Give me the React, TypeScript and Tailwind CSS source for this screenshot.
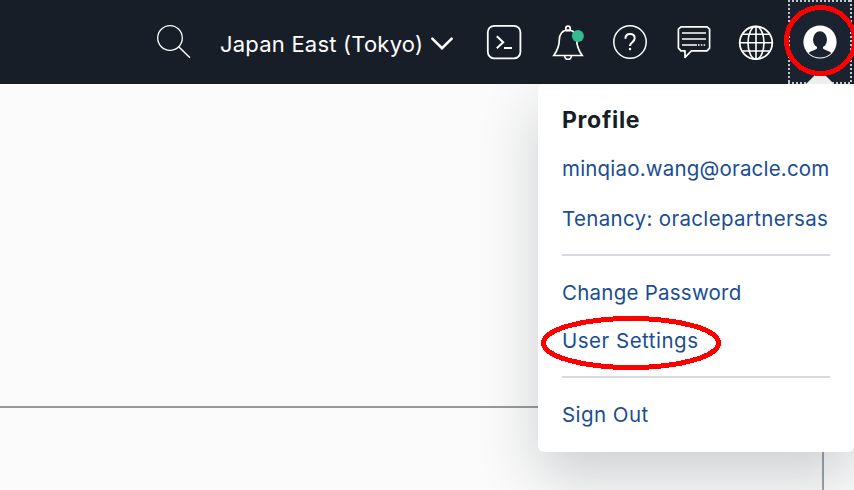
import type { ReactNode } from "react";

function Icon({ children, className = "" }: { children: ReactNode; className?: string }) {
  return (
    <svg
      width="36"
      height="36"
      viewBox="0 0 36 36"
      fill="none"
      stroke="white"
      strokeWidth="1.6"
      className={"shrink-0 " + className}
    >
      {children}
    </svg>
  );
}

function Header() {
  return (
    <header className="flex h-[84px] items-center bg-[#171e27] pl-[156px] text-white">
      <Icon className="mr-7">
        <circle cx="14" cy="14" r="12.3" strokeWidth="1.3" />
        <path d="M22.7 22.8 34 33.8" strokeWidth="1.5" />
      </Icon>
      <button className="flex w-[234px] items-center justify-between pt-1 whitespace-nowrap">
        <span className="text-[22px] leading-7 tracking-[0.21px]">Japan East (Tokyo)</span>
        <svg width="24" height="16" viewBox="0 0 24 16" fill="none" stroke="white" strokeWidth="2.5" strokeLinecap="round">
          <path d="M2.3 2.6 12 12.2 21.7 2.6" />
        </svg>
      </button>
      <Icon className="ml-8">
        <rect x="1.8" y="1.8" width="32.6" height="32.6" rx="6.5" strokeWidth="1.8" />
        <path d="m10.8 12.2 6.4 6-6.4 6M18 24h8" strokeWidth="2" />
      </Icon>
      <Icon className="ml-7">
        <path d="M3.8 31.5C7.3 26.7 9.3 21.5 9.3 15.8c0-6 3.4-9.7 8.7-9.7s8.7 3.7 8.7 9.7c0 5.7 2 10.9 5.5 15.7Z" strokeWidth="1.7" />
        <circle cx="18" cy="4.4" r="2.3" strokeWidth="1.6" />
        <path d="M14.6 31.5c.2 2.7 1.5 3.9 3.4 3.9s3.2-1.2 3.4-3.9" strokeWidth="1.6" />
        <circle cx="27.9" cy="12" r="6" fill="#34bb92" stroke="none" />
      </Icon>
      <Icon className="ml-[26px]">
        <circle cx="18" cy="18" r="16.2" strokeWidth="1.5" />
        <path d="M13.4 14.8c0-2.9 1.8-4.8 4.6-4.8s4.7 1.7 4.7 4.3c0 4-4.7 4-4.7 7.8" strokeWidth="2" />
        <path d="M18 23.9v2.3" strokeWidth="2.2" />
      </Icon>
      <Icon className="ml-7">
        <path d="M5 2.8h26l2.6 2.4v19L31 26.8H15.4L9 33.4v-6.6H5l-2.6-2.6v-19Z" strokeWidth="1.7" strokeLinejoin="round" />
        <path d="M6 9h24M6 15h24M6 21h15" strokeWidth="1.7" />
        <path d="M22 21h8" strokeDasharray="1.6 1.2" strokeWidth="1.6" />
      </Icon>
      <Icon className="ml-[26px]">
        <circle cx="18" cy="18.8" r="16.3" strokeWidth="1.8" />
        <ellipse cx="18" cy="18.8" rx="8" ry="16.3" />
        <path d="M18 2.5v32.6M1.7 18.8h32.6M4.5 10.3h27M4.5 27h27" strokeWidth="1.6" />
      </Icon>
      <button className="relative ml-[14px] flex h-[84px] w-16 shrink-0 items-center justify-center bg-[#1b2330]">
        <svg className="absolute inset-0" width="64" height="84" fill="none" stroke="#c2c5c9" strokeWidth="2" strokeDasharray="2 2">
          <path d="M0 1h64M1 0v84M63 0v84M0 83h64" />
        </svg>
        <svg width="36" height="36" viewBox="0 0 36 36">
          <circle cx="18" cy="18" r="16.6" fill="white" />
          <ellipse cx="18" cy="15.6" rx="7" ry="8.4" fill="#1b2330" />
          <path d="M15 22h6v2.4c1.4 1.6 5.8 2.2 8.4 4.6-6.6 6-16.2 6-22.8 0 2.6-2.4 7-3 8.4-4.6Z" fill="#1b2330" />
        </svg>
        <svg className="absolute top-[72px] left-[18px]" width="28" height="12" viewBox="0 0 28 12">
          <path d="M0 12 11 1q3-2 6 0l11 11Z" fill="#eeeeef" />
        </svg>
      </button>
    </header>
  );
}

function ProfileMenu() {
  return (
    <nav className="absolute top-[84px] left-[538px] h-[368px] w-[316px] rounded-md bg-white px-6 pt-5 text-[20.5px] leading-8 whitespace-nowrap text-[#194d95] shadow-[0_24px_60px_rgba(22,29,38,0.2)]">
      <h2 className="text-[23px] font-bold tracking-[0.7px] text-[#171e27]">Profile</h2>
      <a className="mt-[17px] block tracking-[0.19px]">minqiao.wang@oracle.com</a>
      <a className="mt-[18px] block tracking-[0.33px]">Tenancy: oraclepartnersas</a>
      <hr className="mt-[19px] w-[268px] border-t-2 border-[#d9dadf]" />
      <a className="mt-[21px] block tracking-[0.24px]">Change Password</a>
      <a className="mt-4 block tracking-[0.5px]">User Settings</a>
      <hr className="mt-[19px] w-[268px] border-t-2 border-[#d9dadf]" />
      <a className="mt-[21px] block tracking-[0.45px]">Sign Out</a>
    </nav>
  );
}

export default function App() {
  return (
    <div className="relative flex h-[490px] w-[854px] flex-col overflow-hidden bg-[#fbfbfb] font-['Inter',sans-serif]">
      <div className="relative z-10"><Header /></div>
      <main className="flex flex-1 flex-col">
        <section className="h-[324px] border-b-2 border-[#999999]" />
        <section className="w-[824px] flex-1 border-r-2 border-[#9ba3ac]" />
      </main>
      <ProfileMenu />
      <svg className="pointer-events-none absolute inset-0 z-20" width="854" height="490" fill="none" stroke="#ff0000" strokeWidth="5" shapeRendering="crispEdges">
        <ellipse cx="820.5" cy="40.5" rx="34" ry="33" />
        <ellipse cx="631" cy="343" rx="87.5" ry="24.5" />
      </svg>
    </div>
  );
}
